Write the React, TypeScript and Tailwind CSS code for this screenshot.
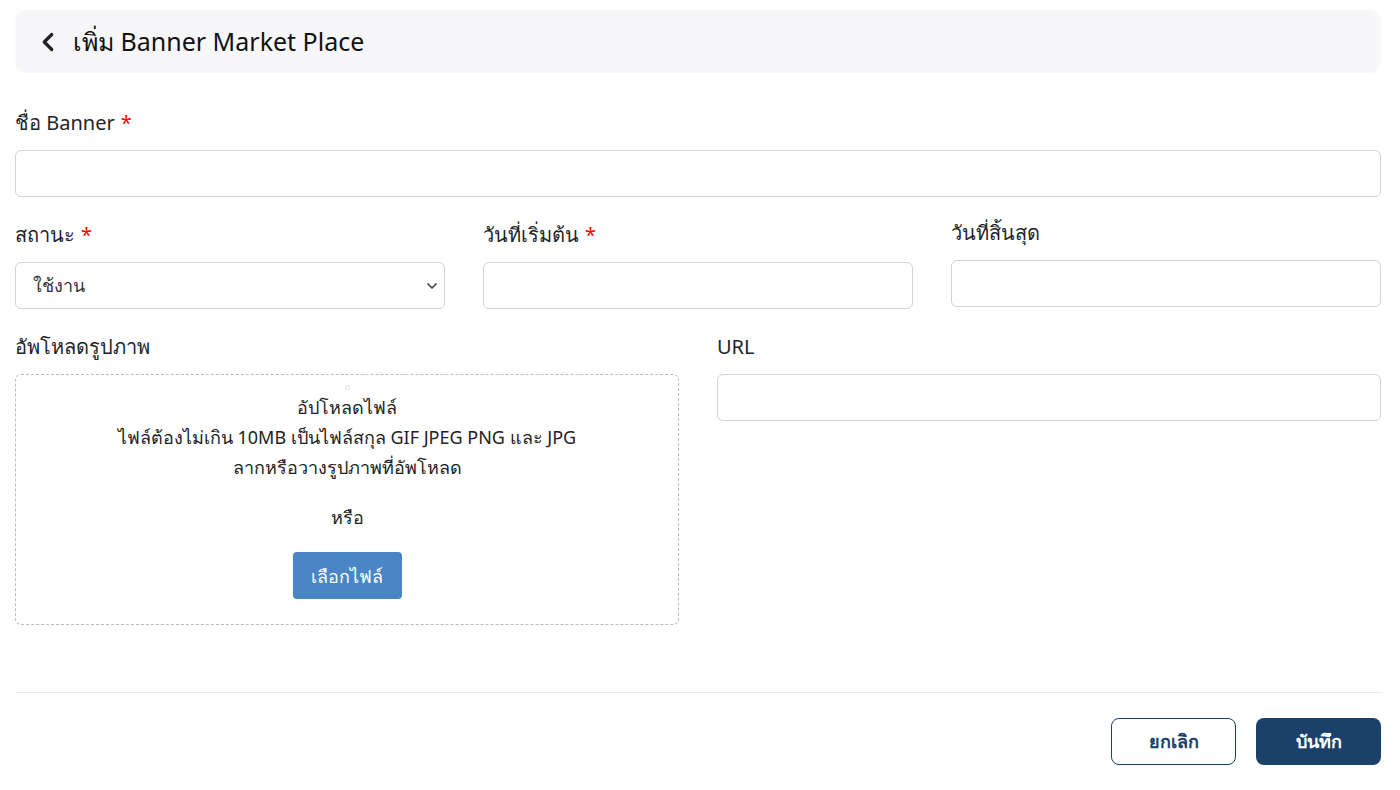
import { ChevronDown, ChevronLeft } from 'lucide-react';

const font = { fontFamily: '"Noto Sans", "Open Sans", sans-serif' };

function Label({ text, required }: { text: string; required?: boolean }) {
  return (
    <label className="block text-[20px] leading-[30px] text-[#212529] mb-[12px]">
      {text}
      {required && <span className="text-[#ff0000] ml-[6px]">*</span>}
    </label>
  );
}

function TextInput() {
  return (
    <input
      type="text"
      className="block w-full h-[47px] rounded-[6px] border border-[#ced4da] bg-white px-3 outline-none"
    />
  );
}

export default function App() {
  return (
    <div className="min-h-[790px] bg-white pl-[15px] pr-[19px] pt-[10px] text-[#212529]" style={font}>
      {/* header */}
      <div className="flex items-center h-[63px] rounded-[12px] bg-[#f7f7f9] pl-[18px]">
        <ChevronLeft size={30} strokeWidth={2.6} className="text-[#222]" />
        <h1 className="ml-[10px] text-[25px] font-normal text-[#111]">เพิ่ม Banner Market Place</h1>
      </div>

      <div className="mt-[35px]">
        <Label text="ชื่อ Banner" required />
        <TextInput />
      </div>

      <div className="mt-[23px] grid grid-cols-3 gap-[38px]">
        <div>
          <Label text="สถานะ" required />
          <div className="relative">
            <select className="block w-full h-[47px] appearance-none rounded-[6px] border border-[#ced4da] bg-white pl-[17px] text-[18px] text-[#333] outline-none">
              <option>ใช้งาน</option>
              <option>ไม่ใช้งาน</option>
            </select>
            <ChevronDown size={16} strokeWidth={2.5} className="absolute right-[5px] top-[16px] text-[#444] pointer-events-none" />
          </div>
        </div>
        <div>
          <Label text="วันที่เริ่มต้น" required />
          <TextInput />
        </div>
        <div className="-mt-[2px]">
          <Label text="วันที่สิ้นสุด" />
          <TextInput />
        </div>
      </div>

      <div className="mt-[23px] grid grid-cols-2 gap-[38px]">
        <div>
          <Label text="อัพโหลดรูปภาพ" />
          <div className="flex flex-col items-center h-[251px] rounded-[6px] border border-dashed border-[#bbbbbb] pt-[10px] text-[18px] leading-[30px] text-[#222]">
            <span className="block w-[5px] h-[5px] rounded-full border border-[#ddd]" />
            <p className="mt-[2px]">อัปโหลดไฟล์</p>
            <p>ไฟล์ต้องไม่เกิน 10MB เป็นไฟล์สกุล GIF JPEG PNG และ JPG</p>
            <p>ลากหรือวางรูปภาพที่อัพโหลด</p>
            <p className="mt-[20px]">หรือ</p>
            <button className="mt-[20px] h-[47px] w-[109px] rounded-[4px] bg-[#4a86c5] text-[18px] text-white">เลือกไฟล์</button>
          </div>
        </div>
        <div>
          <Label text="URL" />
          <TextInput />
        </div>
      </div>

      <div className="mt-[67px] border-t border-[#eaeaea]" />

      <div className="mt-[25px] flex justify-end gap-[20px]">
        <button className="h-[47px] w-[125px] rounded-[8px] border border-[#1b416b] bg-white text-[18px] font-semibold text-[#1b416b]">ยกเลิก</button>
        <button className="h-[47px] w-[125px] rounded-[8px] bg-[#1b416b] text-[18px] font-semibold text-white">บันทึก</button>
      </div>
    </div>
  );
}
